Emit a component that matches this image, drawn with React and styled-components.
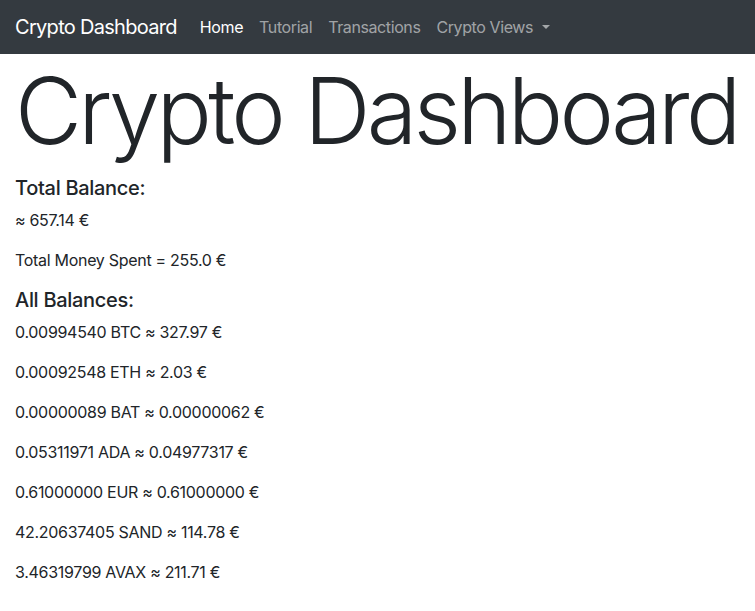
import styled, { createGlobalStyle } from "styled-components";

const GlobalStyle = createGlobalStyle`
  body {
    margin: 0;
    font-family: Inter, "Noto Sans", "Liberation Sans", sans-serif;
    font-size: 16px;
    line-height: 1.5;
    color: #212529;
    background: #fff;
  }
`;

const Navbar = styled.nav`
  display: flex;
  align-items: center;
  height: 54px;
  padding: 0 15px;
  background-color: #343a40;
`;

const Brand = styled.a`
  font-size: 20px;
  line-height: 30px;
  color: #fff;
  margin-right: 15px;
  text-decoration: none;
  letter-spacing: -0.7px;
`;

const NavList = styled.ul`
  display: flex;
  list-style: none;
  margin: 0;
  padding: 0;
`;

const NavLink = styled.a`
  display: block;
  padding: 8px;
  font-size: 16px;
  color: ${(props) => (props.active ? "#fff" : "rgba(255, 255, 255, 0.55)")};
  text-decoration: none;
  letter-spacing: -0.4px;

  &.dropdown::after {
    content: "";
    display: inline-block;
    margin-left: 0.55em;
    vertical-align: 0.255em;
    border-top: 0.3em solid;
    border-right: 0.3em solid transparent;
    border-left: 0.3em solid transparent;
  }
`;

const Container = styled.main`
  padding: 0 15px;
`;

const Display = styled.h1`
  margin: 0 0 8px;
  font-size: 92px;
  font-weight: 300;
  line-height: 114px;
  letter-spacing: -3.7px;
  white-space: nowrap;
`;

const SectionTitle = styled.h5`
  margin: 0 0 8px;
  font-size: 20px;
  font-weight: 500;
  line-height: 24px;
  letter-spacing: -0.3px;
`;

const Line = styled.p`
  margin: 0 0 16px;
  line-height: 24px;
  letter-spacing: -0.3px;
`;

const balances = [
  "0.00994540 BTC ≈ 327.97 €",
  "0.00092548 ETH ≈ 2.03 €",
  "0.00000089 BAT ≈ 0.00000062 €",
  "0.05311971 ADA ≈ 0.04977317 €",
  "0.61000000 EUR ≈ 0.61000000 €",
  "42.20637405 SAND ≈ 114.78 €",
  "3.46319799 AVAX ≈ 211.71 €",
];

export default function App() {
  return (
    <>
      <GlobalStyle />
      <Navbar>
        <Brand href="#">Crypto Dashboard</Brand>
        <NavList>
          <li><NavLink href="#" active>Home</NavLink></li>
          <li><NavLink href="#">Tutorial</NavLink></li>
          <li><NavLink href="#">Transactions</NavLink></li>
          <li><NavLink href="#" className="dropdown">Crypto Views</NavLink></li>
        </NavList>
      </Navbar>
      <Container>
        <Display>Crypto Dashboard</Display>
        <SectionTitle>Total Balance:</SectionTitle>
        <Line>≈ 657.14 €</Line>
        <Line>Total Money Spent = 255.0 €</Line>
        <SectionTitle>All Balances:</SectionTitle>
        {balances.map((b) => (
          <Line key={b}>{b}</Line>
        ))}
      </Container>
    </>
  );
}
